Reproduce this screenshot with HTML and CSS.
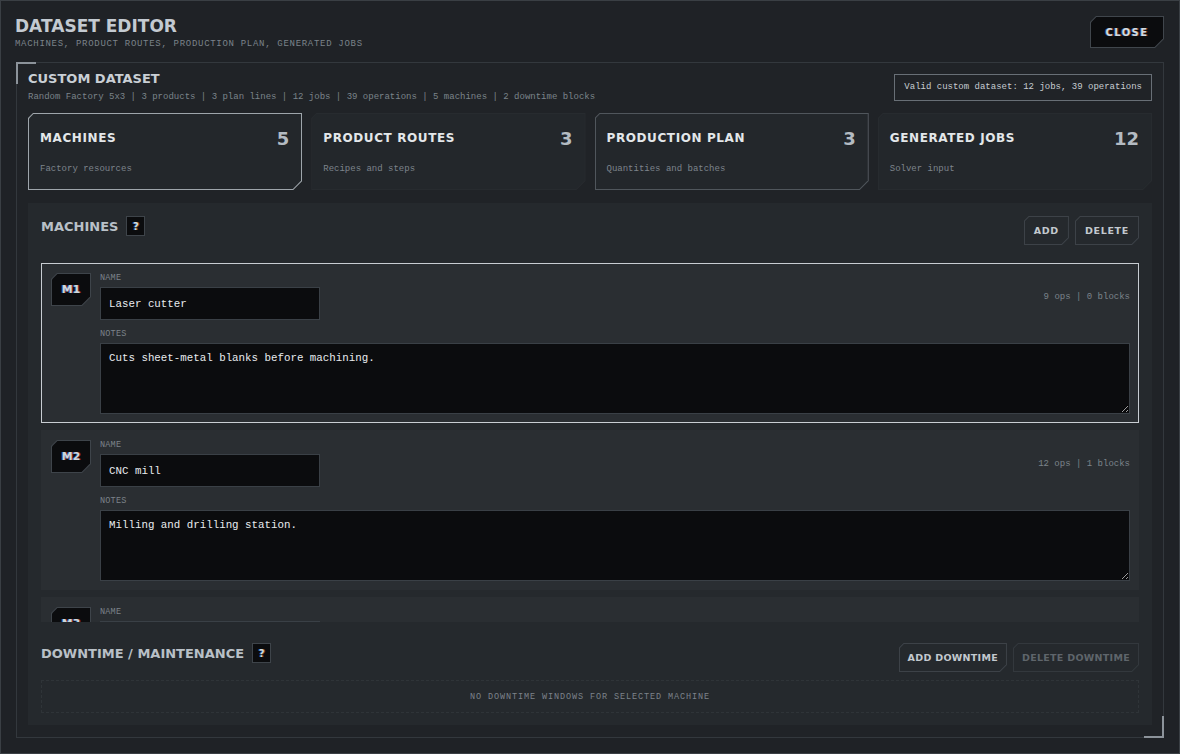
FILE: index.html
```html
<!DOCTYPE html>
<html lang="en">
<head>
  <meta charset="UTF-8" />
  <meta name="viewport" content="width=device-width, initial-scale=1.0" />
  <title>Dataset Editor</title>
  <link rel="stylesheet" href="styles.css">
</head>
<body>
  <div class="modal">
    <header class="topbar">
      <div>
        <h1 class="title">DATASET EDITOR</h1>
        <div class="subtitle">MACHINES, PRODUCT ROUTES, PRODUCTION PLAN, GENERATED JOBS</div>
      </div>
      <button class="cut btn close">CLOSE</button>
    </header>

    <main class="panel">
      <div class="panel-head">
        <div>
          <h2 class="panel-title">CUSTOM DATASET</h2>
          <div class="meta">Random Factory 5x3 | 3 products | 3 plan lines | 12 jobs | 39 operations | 5 machines | 2 downtime blocks</div>
        </div>
        <div class="valid">Valid custom dataset: 12 jobs, 39 operations</div>
      </div>

      <!-- tabs -->
      <nav class="tabs">
        <div class="cut tab active">
          <div class="tab-top"><span class="tab-name">MACHINES</span><span class="tab-count">5</span></div>
          <div class="tab-sub">Factory resources</div>
        </div>
        <div class="cut tab">
          <div class="tab-top"><span class="tab-name">PRODUCT ROUTES</span><span class="tab-count">3</span></div>
          <div class="tab-sub">Recipes and steps</div>
        </div>
        <div class="cut tab hover">
          <div class="tab-top"><span class="tab-name">PRODUCTION PLAN</span><span class="tab-count">3</span></div>
          <div class="tab-sub">Quantities and batches</div>
        </div>
        <div class="cut tab">
          <div class="tab-top"><span class="tab-name">GENERATED JOBS</span><span class="tab-count">12</span></div>
          <div class="tab-sub">Solver input</div>
        </div>
      </nav>

      <section class="section">
        <div class="section-head">
          <div class="section-title">MACHINES <span class="help">?</span></div>
          <div class="actions">
            <button class="cut btn">ADD</button>
            <button class="cut btn">DELETE</button>
          </div>
        </div>

        <div class="machine-list">
          <div class="machine selected">
            <div class="cut badge">M1</div>
            <div class="fields">
              <div class="row">
                <div class="field">
                  <label class="label">NAME</label>
                  <input class="input" type="text" value="Laser cutter">
                </div>
                <div class="stats">9 ops | 0 blocks</div>
              </div>
              <label class="label notes-label">NOTES</label>
              <textarea class="textarea">Cuts sheet-metal blanks before machining.</textarea>
            </div>
          </div>

          <div class="machine">
            <div class="cut badge">M2</div>
            <div class="fields">
              <div class="row">
                <div class="field">
                  <label class="label">NAME</label>
                  <input class="input" type="text" value="CNC mill">
                </div>
                <div class="stats">12 ops | 1 blocks</div>
              </div>
              <label class="label notes-label">NOTES</label>
              <textarea class="textarea">Milling and drilling station.</textarea>
            </div>
          </div>

          <div class="machine">
            <div class="cut badge">M3</div>
            <div class="fields">
              <div class="row">
                <div class="field">
                  <label class="label">NAME</label>
                  <input class="input" type="text" value="Lathe">
                </div>
                <div class="stats">8 ops | 1 blocks</div>
              </div>
              <label class="label notes-label">NOTES</label>
              <textarea class="textarea">Turning of shafts and bushings.</textarea>
            </div>
          </div>
        </div>

        <div class="downtime">
          <div class="section-head short">
            <div class="section-title">DOWNTIME / MAINTENANCE <span class="help">?</span></div>
            <div class="actions">
              <button class="cut btn wide">ADD DOWNTIME</button>
              <button class="cut btn wide disabled">DELETE DOWNTIME</button>
            </div>
          </div>
          <div class="empty">NO DOWNTIME WINDOWS FOR SELECTED MACHINE</div>
        </div>
      </section>
    </main>
  </div>
</body>
</html>
```

FILE: styles.css
```css
* { box-sizing: border-box; }
body {
  margin: 0;
  background: #1f2226;
  font-family: "DejaVu Sans", sans-serif;
}
.modal {
  width: 1180px;
  height: 754px;
  border: 1px solid #3a3f44;
  background: #1f2226;
  display: flex;
  flex-direction: column;
  overflow: hidden;
}

/* cut-corner boxes with a 1px outline */
.cut {
  --line: #3d4248;
  --fill: #25292d;
  --c1: 6px;
  --c2: 9px;
  position: relative;
  background: var(--line);
  clip-path: polygon(var(--c1) 0, 100% 0, 100% calc(100% - var(--c2)), calc(100% - var(--c2)) 100%, 0 100%, 0 var(--c1));
}
.cut::before {
  content: "";
  position: absolute;
  inset: 1px;
  z-index: -1;
  background: var(--fill);
  clip-path: polygon(calc(var(--c1) - 0.6px) 0, 100% 0, 100% calc(100% - var(--c2) + 0.6px), calc(100% - var(--c2) + 0.6px) 100%, 0 100%, 0 calc(var(--c1) - 0.6px));
}

.topbar {
  flex-shrink: 0;
  height: 61px;
  padding: 15px 15px 0 14px;
  display: flex;
  justify-content: space-between;
  align-items: flex-start;
}
.title {
  margin: 0;
  font-size: 17px;
  line-height: 20px;
  font-weight: bold;
  color: #c3cad1;
}
.subtitle {
  margin-top: 2px;
  font-family: "Liberation Mono", monospace;
  font-size: 9px;
  line-height: 12px;
  letter-spacing: 0.7px;
  color: #7b838a;
}
.btn {
  border: none;
  height: 29px;
  padding: 0 10px;
  font-family: "DejaVu Sans", sans-serif;
  font-weight: bold;
  font-size: 9.5px;
  letter-spacing: 0.7px;
  color: #c3c9cf;
  cursor: pointer;
}
.btn.wide {
  padding: 0 9px;
  letter-spacing: 0.3px;
}
.close {
  --fill: #0b0c0e;
  --line: #40464c;
  width: 74px;
  height: 32px;
  font-size: 10px;
  letter-spacing: 1.4px;
  color: #d3d9df;
  text-shadow: -1px 0 rgba(70, 150, 255, 0.55), 1px 0 rgba(255, 120, 70, 0.45);
}

.panel {
  flex: 1;
  min-height: 0;
  margin: 0 15px 15px;
  border: 1px solid #33383d;
  background: #202327;
  padding: 8px 11px 12px;
  display: flex;
  flex-direction: column;
  position: relative;
}
.panel::before,
.panel::after {
  content: "";
  position: absolute;
  width: 18px;
  height: 20px;
  border: 0 solid #8c939a;
}
.panel::before {
  top: -1px;
  left: -1px;
  border-top-width: 2px;
  border-left-width: 2px;
}
.panel::after {
  right: -1px;
  bottom: -1px;
  border-right-width: 2px;
  border-bottom-width: 2px;
}
.panel-head {
  flex-shrink: 0;
  display: flex;
  justify-content: space-between;
  align-items: center;
}
.panel-title {
  margin: 0;
  font-size: 13px;
  line-height: 16px;
  font-weight: bold;
  color: #c9cfd5;
}
.meta {
  margin-top: 4px;
  font-family: "Liberation Mono", monospace;
  font-size: 9px;
  line-height: 12px;
  color: #7b838a;
}
.valid {
  height: 27px;
  padding: 0 9px;
  display: flex;
  align-items: center;
  border: 1px solid #686f76;
  font-family: "Liberation Mono", monospace;
  font-size: 9px;
  color: #c6ccd2;
}

.tabs {
  flex-shrink: 0;
  margin-top: 10px;
  display: grid;
  grid-template-columns: repeat(4, 1fr);
  gap: 9px;
}
.tab {
  --line: #272b2f;
  --fill: #23272b;
  --c1: 5px;
  --c2: 9px;
  height: 77px;
  padding: 16px 13px 0 12px;
}
.tab.active { --line: #9ea5ab; }
.tab.hover { --line: #50565c; }
.tab-top {
  display: flex;
  justify-content: space-between;
  align-items: center;
  height: 18px;
}
.tab-name {
  font-size: 12px;
  font-weight: bold;
  letter-spacing: 0.6px;
  color: #e3e7ea;
}
.tab-count {
  font-size: 18px;
  font-weight: bold;
  color: #b4bbc2;
}
.tab-sub {
  margin-top: 16px;
  font-family: "Liberation Mono", monospace;
  font-size: 9px;
  line-height: 12px;
  color: #7d848b;
}

.section {
  flex: 1;
  min-height: 0;
  margin-top: 13px;
  background: #25292d;
  padding: 13px 13px 12px;
  display: flex;
  flex-direction: column;
}
.section-head {
  flex-shrink: 0;
  height: 30px;
  display: flex;
  justify-content: space-between;
  align-items: flex-start;
}
.section-head.short { height: 29px; }
.section-title {
  height: 20px;
  display: flex;
  align-items: center;
  gap: 8px;
  font-size: 13px;
  font-weight: bold;
  color: #b9c0c7;
}
.help {
  width: 19px;
  height: 20px;
  display: flex;
  align-items: center;
  justify-content: center;
  background: #0b0c0e;
  border: 1px solid #3e444a;
  font-size: 10px;
  color: #d3d9df;
  text-shadow: -1px 0 rgba(70, 150, 255, 0.55), 1px 0 rgba(255, 150, 60, 0.5);
}
.actions {
  display: flex;
  gap: 6px;
}
.actions .btn { --c1: 5px; --c2: 7px; }
.btn.disabled {
  --line: #33383d;
  color: #5f656b;
}

.machine-list {
  flex: 1;
  min-height: 0;
  margin-top: 17px;
  overflow: hidden;
  display: flex;
  flex-direction: column;
  gap: 7px;
}
.machine {
  flex-shrink: 0;
  display: flex;
  gap: 9px;
  background: #2a2e32;
  border: 1px solid transparent;
  padding: 9px 8px 8px 9px;
}
.machine.selected { border-color: #c8cdd2; }
.badge {
  --fill: #0b0c0e;
  --line: #3e444a;
  --c1: 6px;
  --c2: 9px;
  width: 40px;
  height: 33px;
  flex-shrink: 0;
  display: flex;
  align-items: center;
  justify-content: center;
  font-size: 11px;
  font-weight: bold;
  color: #cfd6dd;
  text-shadow: -1px 0 rgba(70, 160, 255, 0.6), 1px 0 rgba(255, 70, 70, 0.5);
}
.fields {
  flex: 1;
  display: flex;
  flex-direction: column;
}
.row {
  display: flex;
  justify-content: space-between;
  align-items: center;
}
.field {
  display: flex;
  flex-direction: column;
}
.label {
  font-family: "Liberation Mono", monospace;
  font-size: 8.5px;
  line-height: 11px;
  letter-spacing: 0.2px;
  color: #7c838a;
  margin-bottom: 3px;
}
.notes-label { margin-top: 9px; }
.input,
.textarea {
  background: #0b0c0e;
  border: 1px solid #3a4046;
  color: #e8ebee;
  font-family: "Liberation Mono", monospace;
  font-size: 10.8px;
  outline: none;
}
.input {
  width: 220px;
  height: 33px;
  padding: 0 8px;
}
.textarea {
  height: 71px;
  padding: 8px;
  resize: vertical;
  line-height: 13px;
}
.stats {
  font-family: "Liberation Mono", monospace;
  font-size: 9px;
  color: #7b838a;
}

.downtime {
  flex-shrink: 0;
  padding-top: 21px;
}
.empty {
  margin-top: 8px;
  height: 33px;
  border: 1px dashed #2f3438;
  display: flex;
  align-items: center;
  justify-content: center;
  font-family: "Liberation Mono", monospace;
  font-size: 8.5px;
  letter-spacing: 0.9px;
  color: #7c838a;
}
```
